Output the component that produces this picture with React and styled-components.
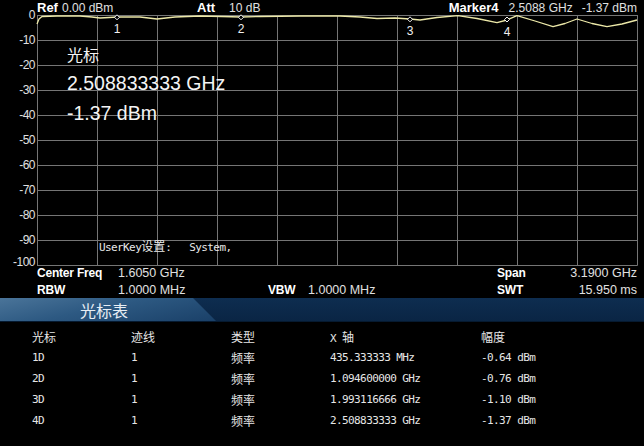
import styled, { createGlobalStyle } from "styled-components";

const GlobalStyle = createGlobalStyle`
  html, body {
    margin: 0;
    padding: 0;
    background: #000;
  }
`;

const Screen = styled.div`
  width: 644px;
  height: 446px;
  background: #000;
  overflow: hidden;
  display: flex;
  flex-direction: column;
  font-family: "Liberation Sans", Arial, "Noto Sans CJK SC", sans-serif;
  color: #e2e2e2;
`;

// header: Ref / Att / Marker
const TopBar = styled.div`
  height: 15px;
  display: grid;
  grid-template-columns: 160px 1fr auto;
  padding: 0 7px 0 37px;
  align-items: center;
  line-height: 15px;
`;

const Pair = styled.div`
  display: flex;
  align-items: baseline;
  gap: ${(p) => p.$gap || 4}px;
  white-space: nowrap;
`;

const Key = styled.span`
  font-weight: bold;
  font-size: ${(p) => p.$size || 13}px;
  letter-spacing: ${(p) => p.$spacing || 0}px;
  color: #fff;
`;

const Val = styled.span`
  font-size: ${(p) => p.$size || 12}px;
  color: #e0e0e0;
`;

// chart
const ChartRow = styled.div`
  display: flex;
  height: 250px;
`;

const AxisCol = styled.div`
  width: 37px;
  display: flex;
  flex-direction: column;
  margin-top: -12.5px;
`;

const Tick = styled.div`
  height: 25px;
  line-height: 25px;
  text-align: right;
  padding-right: 2px;
  font-size: 12px;
  letter-spacing: -0.5px;
  color: #e0e0e0;
  transform: translateY(${(p) => (p.$last ? -3 : 0)}px);
`;

const Plot = styled.div`
  position: relative;
  width: 601px;
  height: 250px;

  svg {
    display: block;
    overflow: visible;
  }
`;

const CursorInfo = styled.div`
  position: absolute;
  left: 30px;
  top: 29px;
  display: flex;
  flex-direction: column;
  color: #f4f4f4;
`;

const CursorTitle = styled.div`
  font-family: "Noto Sans CJK SC", sans-serif;
  font-size: 16px;
  line-height: 20px;
  margin-bottom: 4px;
`;

const CursorLine = styled.div`
  font-size: 19.5px;
  line-height: 30px;
  white-space: nowrap;
`;

const UserKey = styled.div`
  position: absolute;
  left: 62px;
  top: 223px;
  line-height: 16px;
  font-family: "DejaVu Sans Mono", "Noto Sans CJK SC", monospace;
  font-size: 11px;
  letter-spacing: -0.6px;
  white-space: pre;
  color: #e8e8e8;
`;

const Cjk = styled.span`
  font-family: "Noto Sans CJK SC", sans-serif;
  font-size: 12px;
  letter-spacing: 0;
`;

// settings under the chart
const InfoBlock = styled.div`
  height: 33px;
  display: grid;
  grid-template-columns: 81px 150px 40px 189px auto 1fr;
  grid-auto-rows: 16.5px;
  padding: 0 7px 0 37px;
  align-items: center;
  white-space: nowrap;
`;

const RightVal = styled(Val)`
  justify-self: end;
`;

// tab bar
const TabBar = styled.div`
  height: 23px;
  background: linear-gradient(to bottom, #0e2d50, #0a2544);
  border-bottom: 1px solid #061a30;
  display: flex;
`;

const Tab = styled.div`
  width: 216px;
  height: 100%;
  clip-path: polygon(0 0, 193px 0, 216px 100%, 0 100%);
  background: linear-gradient(168deg, #4a7499 0%, #2d5982 45%, #1a4068 100%);
  display: flex;
  align-items: center;
  padding-left: 80px;
  box-sizing: border-box;
  font-family: "Noto Sans CJK SC", sans-serif;
  font-size: 16px;
  color: #e8eef4;
`;

// marker table
const Table = styled.div`
  display: grid;
  grid-template-columns: 99px 100px 99px 151px 1fr;
  grid-auto-rows: 21px;
  padding: 4px 0 0 32px;
  align-items: center;
  font-family: "DejaVu Sans Mono", "Noto Sans CJK SC", monospace;
  font-size: 11px;
  letter-spacing: -0.6px;
  color: #e6e6e6;
  white-space: pre;
`;

const Cell = styled.div`
  font-family: ${(p) =>
    p.$cjk ? '"Noto Sans CJK SC", sans-serif' : "inherit"};
  font-size: ${(p) => (p.$cjk ? 12 : 11)}px;
  letter-spacing: ${(p) => (p.$cjk ? 0 : -0.6)}px;
`;

const ticks = ["0", "-10", "-20", "-30", "-40", "-50", "-60", "-70", "-80", "-90", "-100"];

const trace = [
  [0, 9], [2, 4], [5, 1.5], [20, 1], [43, 1], [55, 2], [63, 3], [72, 2.5], [80, 2],
  [103, 2], [120, 4], [138, 2], [163, 1], [185, 1.5], [204, 2], [223, 1.5],
  [263, 1], [303, 1], [323, 2], [340, 3.5], [358, 3], [373, 4], [383, 5],
  [400, 2.5], [421, 0.7], [440, 3.5], [460, 7.7], [470, 5], [480, 0.7],
  [498, 6], [516, 11.7], [528, 8.5], [540, 4], [555, 8.5], [570, 11.7],
  [585, 9], [600, 5],
];

const markers = [
  { n: 1, x: 80, y: 2.3 },
  { n: 2, x: 204, y: 2.3 },
  { n: 3, x: 373, y: 4.3 },
  { n: 4, x: 470, y: 4.5 },
];

const rows = [
  ["1D", "1", "435.333333 MHz", "-0.64 dBm"],
  ["2D", "1", "1.094600000 GHz", "-0.76 dBm"],
  ["3D", "1", "1.993116666 GHz", "-1.10 dBm"],
  ["4D", "1", "2.508833333 GHz", "-1.37 dBm"],
];

function Grid() {
  const vLines = Array.from({ length: 11 }, (_, i) => i * 60 + 0.5);
  const hLines = Array.from({ length: 11 }, (_, i) => i * 25 + 0.5);
  return (
    <svg width="601" height="251" viewBox="0 0 601 251">
      {vLines.map((x) => (
        <line key={"v" + x} x1={x} y1="0" x2={x} y2="250.5" stroke="#757575" strokeWidth="1" />
      ))}
      {hLines.map((y) => (
        <line key={"h" + y} x1="0" y1={y} x2="600.5" y2={y} stroke="#757575" strokeWidth="1" />
      ))}
      <polyline
        points={trace.map((p) => p.join(",")).join(" ")}
        fill="none"
        stroke="#ece8a8"
        strokeWidth="1.3"
        strokeLinejoin="round"
      />
      {markers.map((m) => (
        <g key={m.n}>
          <polygon
            points={`${m.x},${m.y - 2.5} ${m.x + 2.5},${m.y} ${m.x},${m.y + 2.5} ${m.x - 2.5},${m.y}`}
            fill="#000"
            stroke="#f4f4f4"
            strokeWidth="1"
          />
          <text
            x={m.x}
            y={m.y + 16}
            textAnchor="middle"
            fill="#f0f0f0"
            fontSize="12"
            fontFamily="Liberation Sans, Arial, sans-serif"
          >
            {m.n}
          </text>
        </g>
      ))}
    </svg>
  );
}

export default function App() {
  return (
    <>
      <GlobalStyle />
      <Screen>
        <TopBar>
          <Pair $gap={4}>
            <Key>Ref</Key>
            <Val>0.00 dBm</Val>
          </Pair>
          <Pair $gap={14}>
            <Key>Att</Key>
            <Val>10 dB</Val>
          </Pair>
          <Pair $gap={10}>
            <Key>Marker4</Key>
            <Val>2.5088 GHz</Val>
            <Val style={{ marginLeft: -1 }}>-1.37 dBm</Val>
          </Pair>
        </TopBar>

        <ChartRow>
          <AxisCol>
            {ticks.map((t, i) => (
              <Tick key={t} $last={i === ticks.length - 1}>
                {t}
              </Tick>
            ))}
          </AxisCol>
          <Plot>
            <Grid />
            <CursorInfo>
              <CursorTitle>光标</CursorTitle>
              <CursorLine>2.508833333 GHz</CursorLine>
              <CursorLine>-1.37 dBm</CursorLine>
            </CursorInfo>
            <UserKey>
              UserKey<Cjk>设置</Cjk>:   System,
            </UserKey>
          </Plot>
        </ChartRow>

        <InfoBlock>
          <Key $size={12} $spacing={-0.2}>Center Freq</Key>
          <Val $size={12.5}>1.6050 GHz</Val>
          <span />
          <span />
          <Key $size={12} $spacing={-0.2}>Span</Key>
          <RightVal $size={12.5}>3.1900 GHz</RightVal>

          <Key $size={12} $spacing={-0.2}>RBW</Key>
          <Val $size={12.5}>1.0000 MHz</Val>
          <Key $size={12} $spacing={-0.2}>VBW</Key>
          <Val $size={12.5}>1.0000 MHz</Val>
          <Key $size={12} $spacing={-0.2}>SWT</Key>
          <RightVal $size={12.5}>15.950 ms</RightVal>
        </InfoBlock>

        <TabBar>
          <Tab>光标表</Tab>
        </TabBar>

        <Table>
          <Cell $cjk>光标</Cell>
          <Cell $cjk>迹线</Cell>
          <Cell $cjk>类型</Cell>
          <Cell>
            X <Cjk>轴</Cjk>
          </Cell>
          <Cell $cjk>幅度</Cell>
          {rows.map((r) => [
            <Cell key={r[0] + "a"}>{r[0]}</Cell>,
            <Cell key={r[0] + "b"}>{r[1]}</Cell>,
            <Cell key={r[0] + "c"} $cjk>
              频率
            </Cell>,
            <Cell key={r[0] + "d"}>{r[2]}</Cell>,
            <Cell key={r[0] + "e"}>{r[3]}</Cell>,
          ])}
        </Table>
      </Screen>
    </>
  );
}
